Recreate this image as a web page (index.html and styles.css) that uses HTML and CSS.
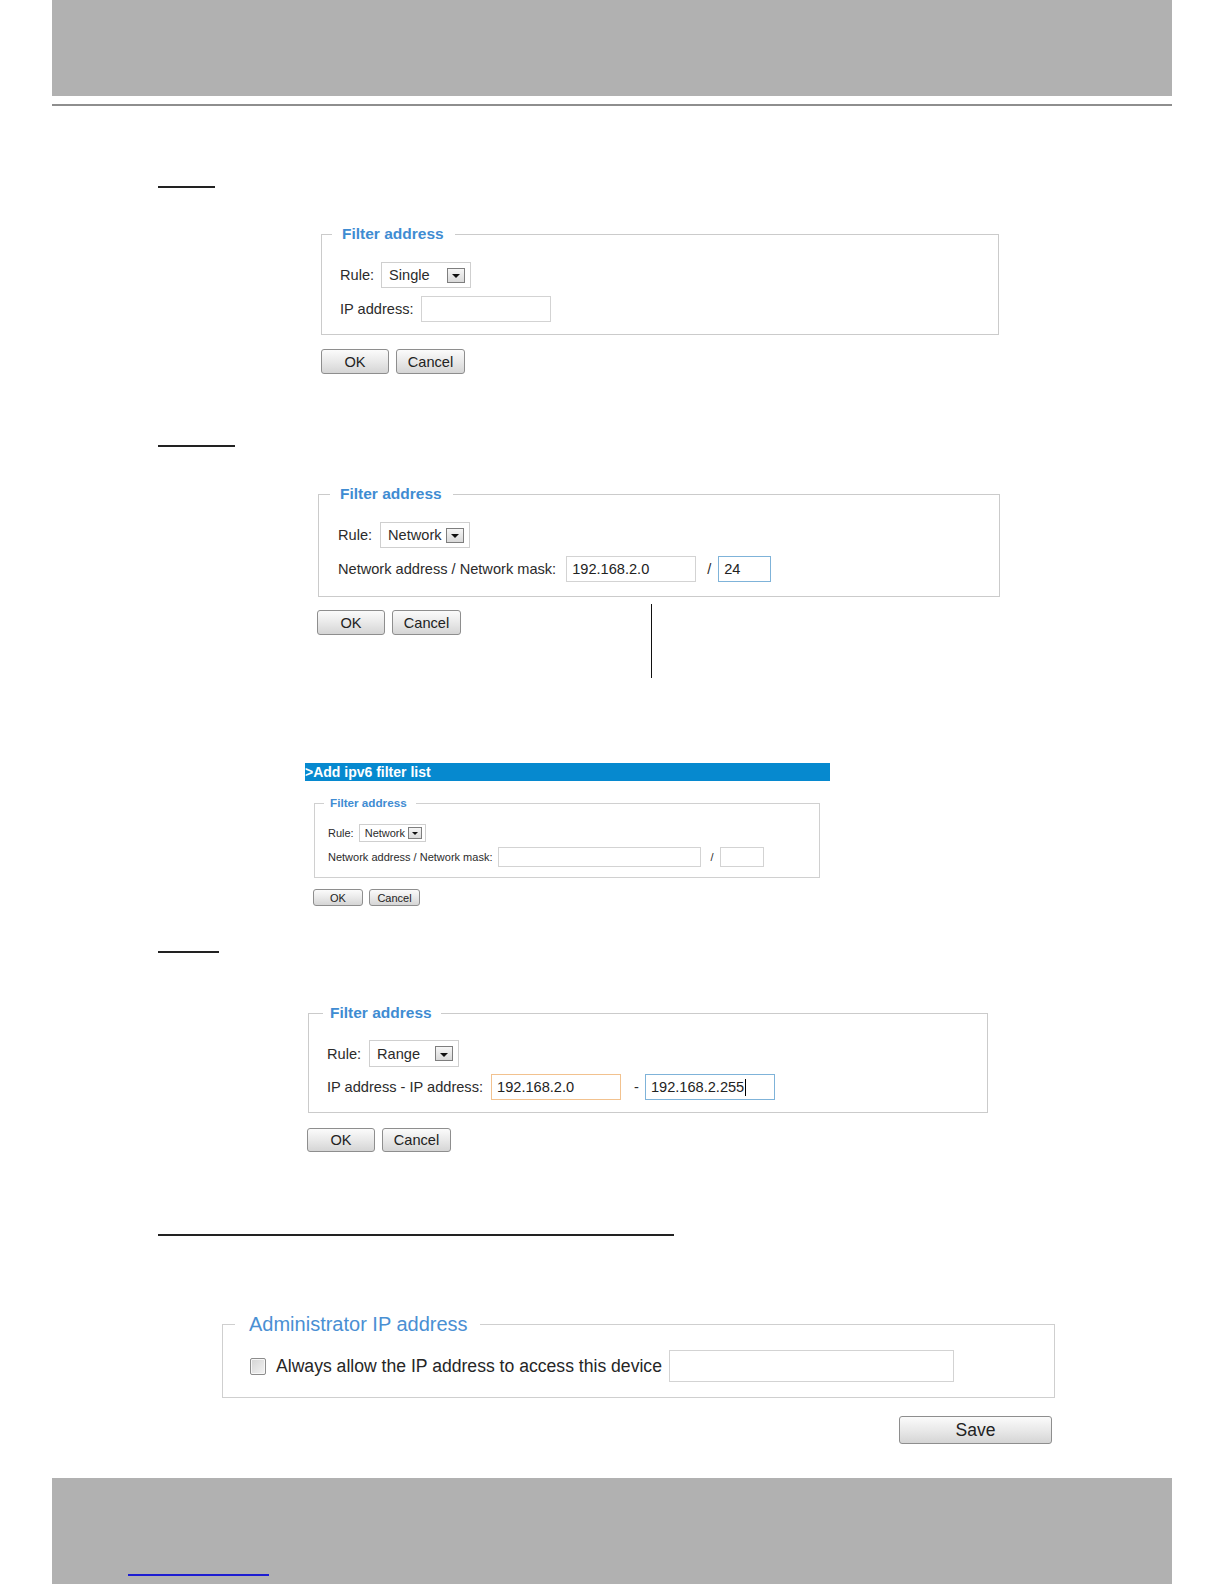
FILE: index.html
```html
<!DOCTYPE html>
<html lang="en">
<head>
<meta charset="utf-8">
<title>Access list – filter address</title>
<link rel="stylesheet" href="styles.css">
</head>
<body>
<div class="page">
  <div class="band band-top"></div>
  <div class="top-rule"></div>

  <div class="uline uline-1"></div>
  <div class="shot lg shot-1">
    <fieldset class="fs">
      <legend>Filter address</legend>
      <div class="row">
        <span class="lbl">Rule:</span>
        <div class="sel"><span class="sel-text">Single</span><i class="drop"></i></div>
      </div>
      <div class="row">
        <span class="lbl">IP address:</span>
        <div class="inp inp-ip"></div>
      </div>
    </fieldset>
    <div class="btns"><button class="btn btn-ok">OK</button><button class="btn btn-cancel">Cancel</button></div>
  </div>

  <div class="uline uline-2"></div>
  <div class="shot lg shot-2">
    <fieldset class="fs">
      <legend>Filter address</legend>
      <div class="row">
        <span class="lbl">Rule:</span>
        <div class="sel"><span class="sel-text">Network</span><i class="drop"></i></div>
      </div>
      <div class="row">
        <span class="lbl lbl-net">Network address / Network mask:</span>
        <div class="inp inp-ip">192.168.2.0</div>
        <span class="sep sep-slash">/</span>
        <div class="inp inp-mask focus-blue">24</div>
      </div>
    </fieldset>
    <div class="btns"><button class="btn btn-ok">OK</button><button class="btn btn-cancel">Cancel</button></div>
    <div class="callout"></div>
  </div>

  <div class="shot sm shot-3">
    <div class="bar">&gt;Add ipv6 filter list</div>
    <fieldset class="fs">
      <legend>Filter address</legend>
      <div class="row row-1">
        <span class="lbl">Rule:</span>
        <div class="sel"><span class="sel-text">Network</span><i class="drop"></i></div>
      </div>
      <div class="row row-2">
        <span class="lbl">Network address / Network mask:</span>
        <div class="inp inp-ip"></div>
        <span class="sep sep-slash">/</span>
        <div class="inp inp-mask"></div>
      </div>
    </fieldset>
    <div class="btns"><button class="btn btn-ok">OK</button><button class="btn btn-cancel">Cancel</button></div>
  </div>

  <div class="uline uline-3"></div>
  <div class="shot lg shot-4">
    <fieldset class="fs">
      <legend>Filter address</legend>
      <div class="row row-1">
        <span class="lbl">Rule:</span>
        <div class="sel"><span class="sel-text">Range</span><i class="drop"></i></div>
      </div>
      <div class="row">
        <span class="lbl">IP address - IP address:</span>
        <div class="inp inp-ip focus-orange">192.168.2.0</div>
        <span class="sep sep-dash">-</span>
        <div class="inp inp-ip focus-blue">192.168.2.255<span class="caret"></span></div>
      </div>
    </fieldset>
    <div class="btns"><button class="btn btn-ok">OK</button><button class="btn btn-cancel">Cancel</button></div>
  </div>

  <div class="uline uline-4"></div>
  <div class="shot admin">
    <fieldset class="fs">
      <legend>Administrator IP address</legend>
      <div class="row">
        <span class="check"></span>
        <span class="lbl">Always allow the IP address to access this device</span>
        <div class="inp inp-admin"></div>
      </div>
    </fieldset>
    <div class="save-row"><button class="btn btn-save">Save</button></div>
  </div>

  <div class="band band-bottom"><div class="foot-link"></div></div>
</div>
</body>
</html>
```

FILE: styles.css
```css
* { box-sizing: border-box; }

body {
  margin: 0;
  background: #ffffff;
  font-family: "Liberation Sans", Arial, sans-serif;
  color: #2b2b2b;
}

.page { width: 1224px; }

/* grey page bands */
.band { margin-left: 52px; width: 1120px; background: #b1b1b1; }
.band-top { height: 96px; }
.band-bottom { margin-top: 34px; height: 106px; padding: 96px 0 0 76px; }
.foot-link { width: 141px; height: 2px; background: #1d1dd2; }
.top-rule { margin: 8px 0 0 52px; width: 1120px; height: 2px; background: #8e8e8e; }

/* underlined headings */
.uline { height: 2px; background: #222; margin-left: 158px; }
.uline-1 { margin-top: 80px; width: 57px; }
.uline-2 { margin-top: 71px; width: 77px; }
.uline-3 { margin-top: 45px; width: 61px; }
.uline-4 { margin-top: 82px; width: 516px; }

/* generic screenshot pieces */
.fs { margin: 0; min-width: 0; border: 1px solid #cbcbcb; }
.fs legend { font-weight: bold; color: #3f8cd2; white-space: nowrap; }
.row { display: flex; align-items: center; }
.lbl { white-space: nowrap; }

.sel { display: flex; align-items: center; border: 1px solid #cfcfcf; background: #fff; overflow: hidden; }
.sel-text { flex: 1; white-space: nowrap; }
.drop {
  display: flex; align-items: center; justify-content: center;
  border: 1px solid #7e7e7e;
  background: linear-gradient(#f6f6f6, #d9d9d9);
}
.drop::after {
  content: "";
  width: 0; height: 0;
  border-left: 4px solid transparent;
  border-right: 4px solid transparent;
  border-top: 4px solid #111;
  margin-top: 2px;
}

.inp { display: flex; align-items: center; border: 1px solid #d3d3d3; background: #fff; color: #222; white-space: nowrap; }
.focus-blue { border-color: #7fb3d9; }
.focus-orange { border-color: #f2c28f; }
.caret { width: 1px; height: 17px; background: #000; margin-left: 1px; }

.btns { display: flex; }
.btn {
  font-family: inherit;
  color: #222;
  border: 1px solid #8e8e8e;
  border-radius: 3px;
  background: linear-gradient(#fbfbfb, #e9e9e9 50%, #d5d5d5);
  padding: 0;
}

/* large filter screenshots */
.lg { font-size: 14.6px; }
.lg .fs legend { font-size: 15.5px; line-height: 18px; margin-left: -8px; padding: 0 11px 0 10px; }
.lg .row { gap: 7px; }
.lg .row + .row { margin-top: 8px; }
.lg .sel { width: 90px; height: 26px; padding-left: 7px; }
.lg .drop { width: 18px; height: 15px; margin-right: 5px; }
.lg .inp { height: 26px; padding-left: 5px; }
.lg .inp-ip { width: 130px; }
.lg .inp-mask { width: 53px; }
.lg .btns { gap: 7px; }
.lg .btn { height: 25px; font-size: 14.6px; }
.lg .btn-ok { width: 68px; }
.lg .btn-cancel { width: 69px; }

.shot-1 { margin: 37px 0 0 321px; }
.shot-1 .fs { width: 678px; padding: 19px 14px 12px 18px; }
.shot-1 .btns { margin-top: 14px; }

.shot-2 { position: relative; margin: 38px 0 0 318px; }
.shot-2 .fs { width: 682px; padding: 19px 14px 14px 19px; }
.shot-2 .row { gap: 8px; }
.shot-2 .lbl-net { margin-right: 2px; }
.shot-2 .btns { margin-top: 13px; margin-left: -1px; }
.sep-slash { margin: 0 3px 0 3px; }
.shot-2 .sep { margin: 0 -1px 0 3px; }
.callout { position: absolute; left: 333px; top: 119px; width: 1px; height: 74px; background: #111; }

.shot-4 { margin: 51px 0 0 308px; }
.shot-4 .fs { width: 680px; padding: 18px 14px 12px 18px; }
.shot-4 .fs legend { margin-left: -4px; padding: 0 9px 0 7px; }
.shot-4 .row { gap: 8px; }
.shot-4 .row-1 .sel { height: 27px; }
.shot-4 .row + .row { margin-top: 7px; }
.shot-4 .sep-dash { margin: 0 -2px 0 5px; }
.shot-4 .btns { margin-top: 15px; margin-left: -1px; }
.shot-4 .btn { height: 24px; }

/* small ipv6 screenshot */
.sm { font-size: 11px; }
.shot-3 { margin: 128px 0 0 305px; }
.bar {
  width: 525px; height: 18px;
  background: #0689cf; color: #fff;
  font-weight: bold; font-size: 14px; line-height: 18px;
  white-space: nowrap;
}
.shot-3 .fs { margin: 15px 0 0 9px; width: 506px; padding: 14px 12px 10px 13px; border-color: #d0d0d0; }
.shot-3 .fs legend { font-size: 11.7px; line-height: 14px; margin-left: -4px; padding: 0 9px 0 6px; }
.shot-3 .row-1 { gap: 5px; height: 18px; }
.shot-3 .row-2 { gap: 6px; height: 20px; margin-top: 5px; }
.shot-3 .sel { width: 67px; height: 18px; padding-left: 5px; }
.shot-3 .drop { width: 14px; height: 12px; margin-right: 3px; }
.shot-3 .drop::after { border-left-width: 3px; border-right-width: 3px; border-top-width: 3px; margin-top: 1px; }
.shot-3 .inp { height: 20px; }
.shot-3 .inp-ip { width: 203px; }
.shot-3 .inp-mask { width: 44px; }
.shot-3 .sep-slash { margin: 0 0 0 3px; }
.shot-3 .btns { margin: 11px 0 0 8px; gap: 6px; }
.shot-3 .btn { height: 17px; font-size: 11px; }
.shot-3 .btn-ok { width: 50px; }
.shot-3 .btn-cancel { width: 51px; }

/* administrator section */
.admin { margin: 77px 0 0 222px; width: 833px; }
.admin .fs { width: 833px; padding: 14px 14px 15px 27px; border-color: #cfcfcf; }
.admin .fs legend { font-weight: normal; font-size: 20px; line-height: 23px; color: #4a8fd3; margin-left: -15px; padding: 0 12px 0 14px; }
.admin .lbl { font-size: 17.6px; color: #262626; margin: 0 7px 0 10px; }
.check {
  width: 16px; height: 17px;
  border: 1px solid #8c8c8c; border-radius: 2px;
  background: linear-gradient(135deg, #d4d4d4, #f3f3f3);
  box-shadow: inset 0 0 0 1px #f7f7f7;
}
.inp-admin { width: 285px; height: 32px; }
.save-row { display: flex; justify-content: flex-end; margin-top: 18px; padding-right: 3px; }
.btn-save { width: 153px; height: 28px; font-size: 17.5px; }
```
